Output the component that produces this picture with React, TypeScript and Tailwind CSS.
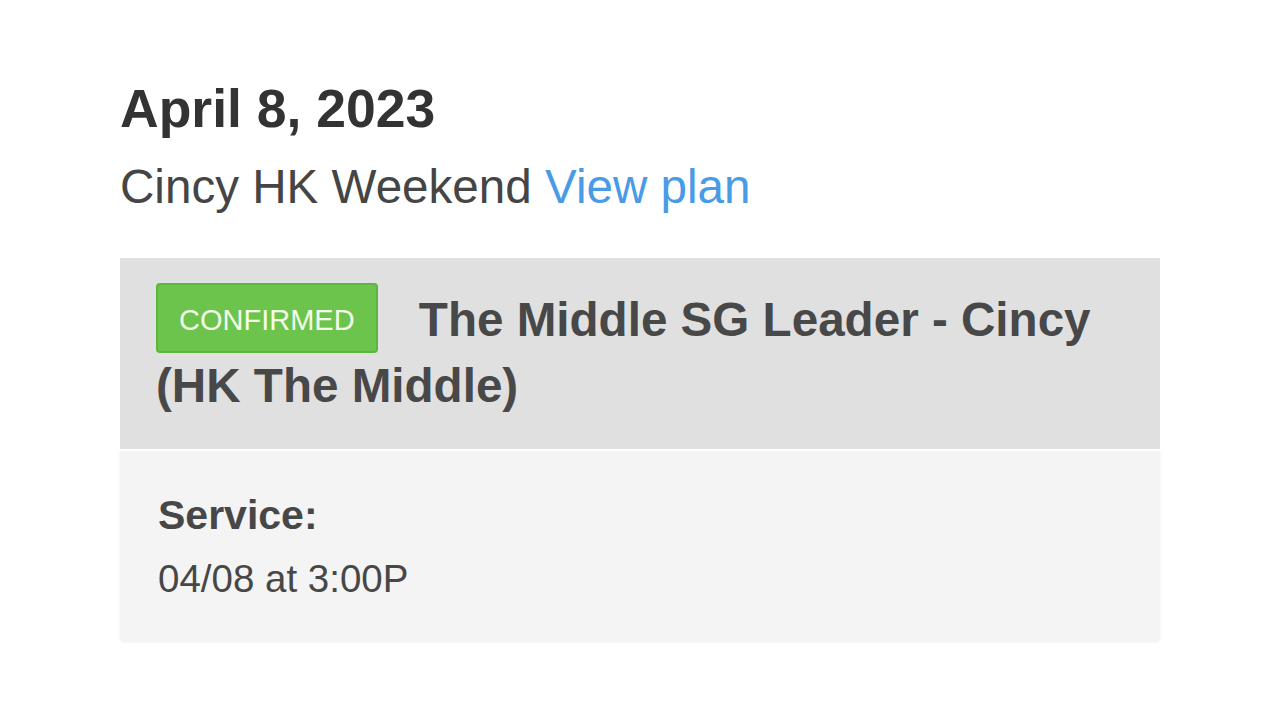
import React from 'react'

const App: React.FC = () => {
  return (
    <div className="min-h-screen bg-white px-[120px] pt-[82px] font-['Liberation_Sans',Arial,sans-serif]">
      <h1 className="text-[53.5px] font-bold leading-none text-[#333333]">
        April 8, 2023
      </h1>
      <p className="mt-[27px] text-[47.6px] leading-none text-[#454545]">
        Cincy HK Weekend{' '}
        <a href="#" className="text-[#4a9be6]">
          View plan
        </a>
      </p>

      <div className="mt-[48px]">
        <div className="bg-[#e0e0e0] px-[36px] pt-[25px] pb-[30px]">
          <h2 className="text-[47.6px] font-bold leading-[66px] text-[#484848]">
            <span className="mr-[28px] inline-block rounded-[4px] border-2 border-[#5db53d] bg-[#6dc44c] px-[21px] pt-[21px] pb-[16px] align-[6px] text-[29px] font-normal leading-none text-[#f2fde9]">
              CONFIRMED
            </span>{' '}
            The Middle SG Leader - Cincy (HK The Middle)
          </h2>
        </div>

        <div className="mt-[2px] rounded-b-[5px] bg-[#f4f4f4] px-[38px] pt-[44px] pb-[42px] shadow-[0_1px_3px_rgba(0,0,0,0.08)]">
          <div className="text-[41px] font-bold leading-none text-[#474747]">
            Service:
          </div>
          <div className="mt-[24px] text-[38.5px] leading-none text-[#474747]">
            04/08 at 3:00P
          </div>
        </div>
      </div>
    </div>
  )
}

export default App
